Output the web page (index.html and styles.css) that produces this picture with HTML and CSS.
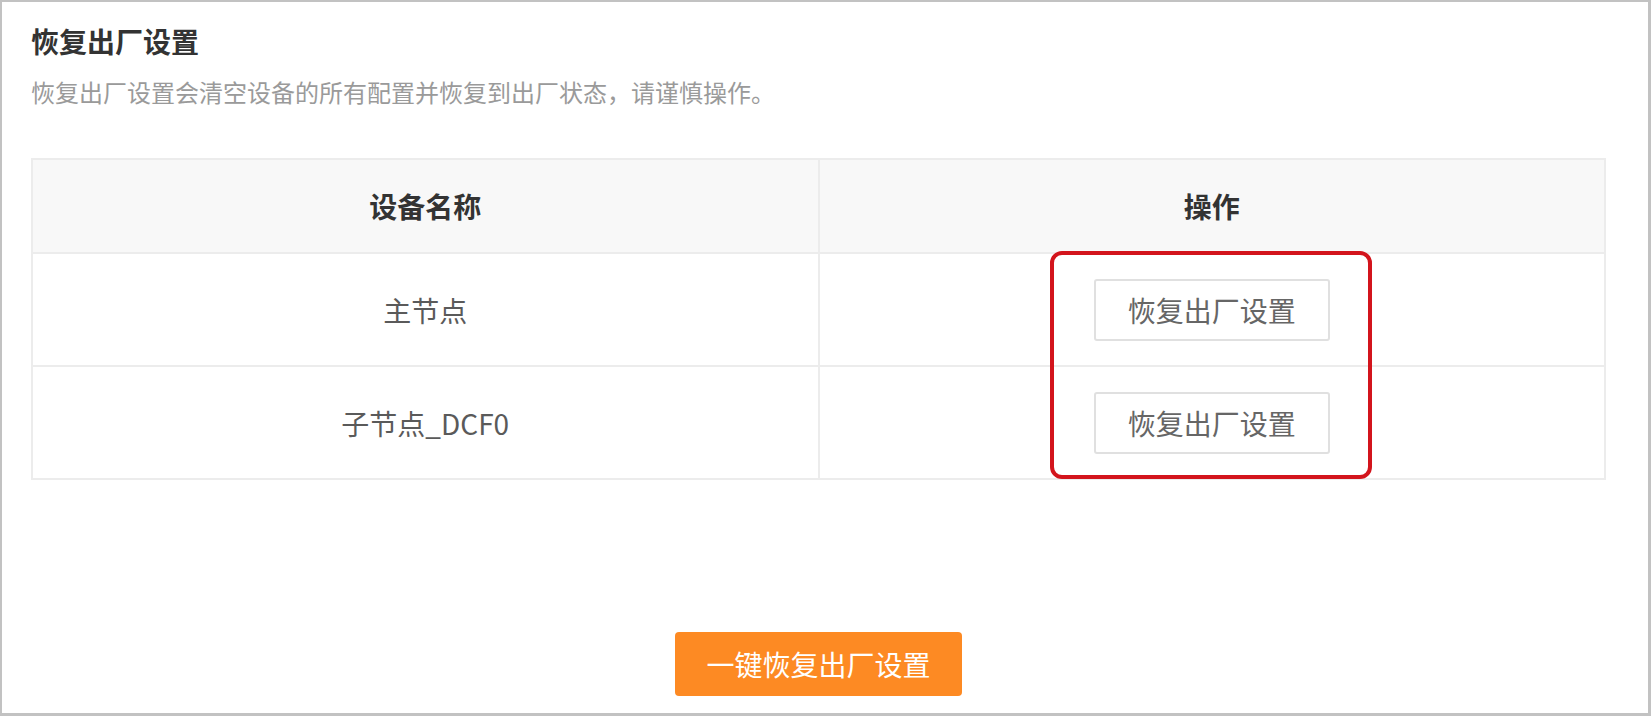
FILE: index.html
```html
<!DOCTYPE html>
<html lang="zh-CN">
<head>
<meta charset="utf-8">
<title>恢复出厂设置</title>
<link rel="stylesheet" href="styles.css">
</head>
<body>
<div class="frame">
  <h1 class="title">恢复出厂设置</h1>
  <p class="desc">恢复出厂设置会清空设备的所有配置并恢复到出厂状态，请谨慎操作。</p>
  <div class="table-wrap">
    <table class="dev-table">
      <thead>
        <tr><th>设备名称</th><th>操作</th></tr>
      </thead>
      <tbody>
        <tr><td>主节点</td><td><button class="btn-reset">恢复出厂设置</button></td></tr>
        <tr><td>子节点_DCF0</td><td><button class="btn-reset">恢复出厂设置</button></td></tr>
      </tbody>
    </table>
    <div class="highlight"></div>
  </div>
  <div class="footer">
    <button class="btn-all">一键恢复出厂设置</button>
  </div>
</div>
</body>
</html>
```

FILE: styles.css
```css
* { box-sizing: border-box; }
html, body { margin: 0; padding: 0; background: #fff; }
body {
  font-family: "Noto Sans CJK SC", "Noto Sans", "Liberation Sans", sans-serif;
  width: 1651px;
  height: 716px;
  overflow: hidden;
}
.frame {
  width: 1651px;
  height: 716px;
  border-style: solid;
  border-color: #c2c2c2;
  border-width: 2px 3px 3px 2px;
  padding: 19px 42px 0 29px;
  background: #fff;
}
.title {
  margin: 0;
  font-size: 28px;
  line-height: 40px;
  font-weight: 700;
  color: #333;
}
.desc {
  margin: 14px 0 0;
  font-size: 24px;
  line-height: 34px;
  color: #9a9a9a;
}
.table-wrap {
  position: relative;
  margin-top: 49px;
}
.dev-table {
  width: 100%;
  border-collapse: collapse;
  table-layout: fixed;
}
.dev-table th, .dev-table td {
  border: 2px solid #ececec;
  text-align: center;
  font-size: 28px;
  padding: 0;
}
.dev-table th {
  height: 94px;
  background: #f8f8f8;
  font-weight: 700;
  color: #333;
}
.dev-table td {
  height: 113px;
  color: #5a5a5a;
}
.btn-reset {
  width: 236px;
  height: 62px;
  border: 2px solid #e0e0e0;
  border-radius: 3px;
  background: #fff;
  color: #666;
  font-family: inherit;
  font-size: 28px;
  padding: 0;
  vertical-align: middle;
}
.highlight {
  position: absolute;
  left: 1019px;
  top: 93px;
  width: 322px;
  height: 228px;
  border: 4px solid #d3141c;
  border-radius: 12px;
  pointer-events: none;
}
.footer {
  display: flex;
  justify-content: center;
  margin-top: 152px;
}
.btn-all {
  width: 287px;
  height: 64px;
  border: none;
  border-radius: 4px;
  background: #fd8a23;
  color: #fff;
  font-family: inherit;
  font-size: 28px;
  padding: 0;
}
```
